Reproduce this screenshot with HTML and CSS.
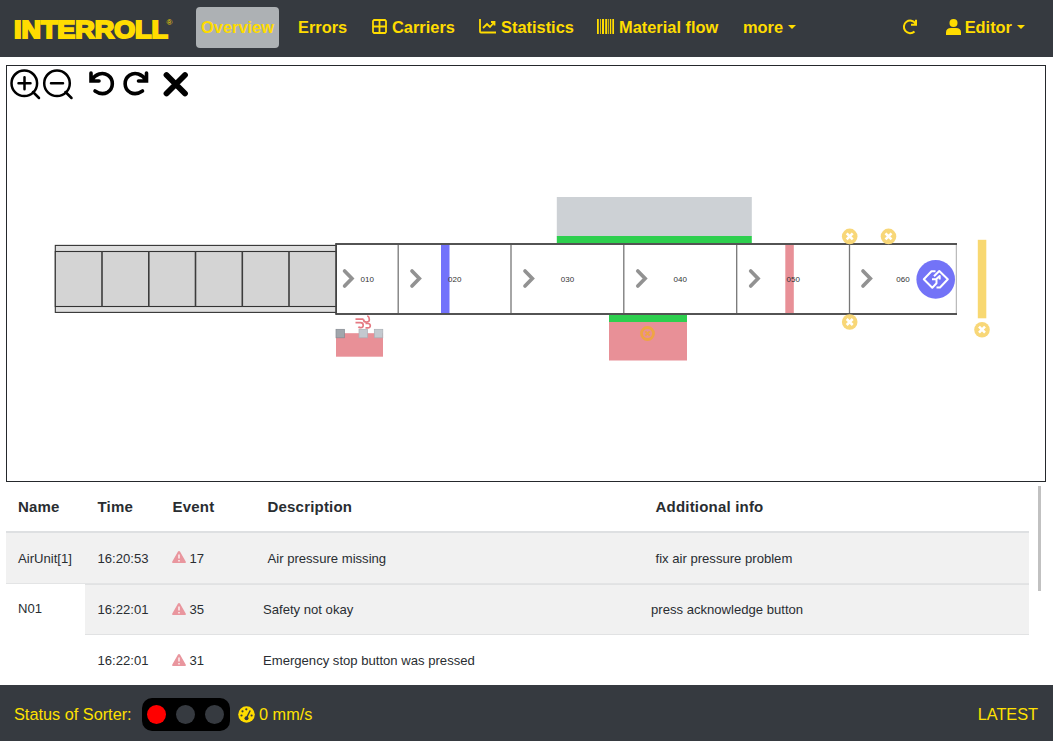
FILE: index.html
```html
<!DOCTYPE html>
<html lang="en">
<head>
<meta charset="utf-8">
<title>Interroll – Overview</title>
<link rel="stylesheet" href="styles.css">
</head>
<body>
<div class="app">
  <header class="navbar">
    <svg class="logo" width="162" height="32" viewBox="12 12 162 32">
      <text class="logo-text" x="14" y="37.500" textLength="154" lengthAdjust="spacingAndGlyphs">INTERROLL</text>
      <text class="logo-mark" x="166.500" y="25">®</text>
    </svg>
    <nav class="menu">
      <a class="item active">Overview</a>
      <a class="item errors">Errors</a>
      <a class="item carriers"><svg width="15" height="15" viewBox="0 0 15 15"><path class="line" d="M2 1h11l1 1v11l-1 1H2l-1-1V2zM7.500 1v13M1 7.500h13"/></svg>Carriers</a>
      <a class="item stats"><svg width="17" height="15" viewBox="0 0 17 15"><path class="line" d="M1 0v12.500q0 1 1 1h15M4 9l4-4 3 3 4-4.500M12 3h3.500v3.500"/></svg>Statistics</a>
      <a class="item flow"><svg width="17" height="15" viewBox="0 0 17 15"><path class="solid" d="M0 0h1.800v15H0zM3 0h.8v15H3zM5 0h2v15H5zM8.200 0h2v15h-2zM11.300 0h.8v15h-.8zM13 0h1.200v15H13zM15.300 0H17v15h-1.700z"/></svg>Material flow</a>
      <a class="item">more<i class="caret"></i></a>
    </nav>
    <div class="user-menu">
      <svg class="reload" width="16" height="16" viewBox="0 0 16 16"><path class="refresh" d="M13.500 4.500A6.300 6.300 0 1 0 12.500 12.500M14 .8v5h-5"/></svg>
      <a class="item user"><svg width="15" height="16" viewBox="0 0 15 16"><circle class="solid" cx="7.500" cy="4" r="4"/><path class="solid" d="M0 16v-2.500Q0 9 5 9h5q5 0 5 4.500V16z"/></svg>Editor<i class="caret"></i></a>
    </div>
  </header>

  <main class="content">
    <section class="canvas">
      <svg class="plan" width="1038" height="415" viewBox="7 66 1038 415">
        <defs>
          <path id="arrow" d="M-4-7.500 3.300 0-4 7.500"/>
          <g id="stop"><circle r="7.800"/><path d="M-3-3 3 3M3-3-3 3"/></g>
        </defs>
        <g class="tools">
          <g stroke-width="2.500"><circle cx="24.300" cy="83.300" r="12.800"/><path d="M18.500 83.300h12M24.500 77.300v12M33 92l6 6"/></g>
          <g stroke-width="2.500"><circle cx="57" cy="83.300" r="12.800"/><path d="M51 83.300h12M65.500 92l6 6"/></g>
          <path stroke-width="3.600" d="M91 73v8h8M91.500 80C95.500 74 102.500 71.500 108 75.300C114 79.500 113.700 88.500 107.500 92.300Q101.500 95.500 95 91"/>
          <path stroke-width="3.600" d="M146.500 73v8h-8M146 80C142 74 135 71.500 129.500 75.300C123.500 79.500 123.700 88.500 130 92.300Q136 95.500 142.500 91"/>
          <path stroke-width="5.800" d="M166.500 75 185 93.500M185 75 166.500 93.500"/>
        </g>

        <g class="belt">
          <rect class="rail" x="55.300" y="245.400" width="281" height="67"/>
          <rect class="bed" x="55.300" y="251.500" width="281" height="55"/>
          <path class="rib" d="M102 251v56M148.800 251v56M195.500 251v56M242.300 251v56M289 251v56"/>
        </g>

        <rect class="chute-grey" x="556.800" y="197" width="195" height="39.500"/>
        <rect class="green" x="556.800" y="236" width="195" height="8"/>
        <rect class="green" x="609" y="314" width="78" height="8"/>
        <rect class="red" x="609" y="322" width="78" height="38.500"/>

        <path class="divider" d="M398.200 244v70M511 244v70M623.800 244v70M736.700 244v70M849.500 244v70"/>
        <path class="end" d="M956.300 244v70"/>
        <rect class="blue" x="441" y="244" width="8.500" height="70"/>
        <rect class="red" x="785.300" y="244" width="8.500" height="70"/>
        <g class="labels">
          <text x="367.300" y="281.700">010</text><text x="454.800" y="281.700">020</text><text x="567.500" y="281.700">030</text>
          <text x="680.300" y="281.700">040</text><text x="793.300" y="281.700">050</text><text x="903" y="281.700">060</text>
        </g>
        <path class="track" d="M335.500 244H957M335.500 314H957"/>
        <path class="start" d="M336 243.300v71.300"/>
        <g class="arrows">
          <use href="#arrow" x="348.600" y="278.500"/><use href="#arrow" x="416" y="278.500"/><use href="#arrow" x="529" y="278.500"/>
          <use href="#arrow" x="641.800" y="278.500"/><use href="#arrow" x="754.700" y="278.500"/><use href="#arrow" x="867" y="278.500"/>
        </g>

        <rect class="red" x="336" y="333.200" width="47" height="23.500"/>
        <path class="air" d="M355.500 319.200h8M355.500 322.700h5q2.700 0 2.700 2.500t-2.700 2.400q-1.600 0-2-1M363.500 319.200q0 3 3 3t2.800-3q0-2.500-2-3.500M364.500 322.700M365.500 323.500h2q2.800 0 2.800 2.200t-2.800 2.100h-2"/>
        <rect class="node dark" x="336" y="329.300" width="8.500" height="8.500"/>
        <rect class="node" x="359" y="329.300" width="8.500" height="8.500"/>
        <rect class="node" x="374.300" y="329.300" width="8.500" height="8.500"/>

        <g class="stops">
          <use href="#stop" x="849.700" y="236.400"/><use href="#stop" x="888.500" y="236.400"/>
          <use href="#stop" x="849.700" y="322"/><use href="#stop" x="982" y="329.700"/>
        </g>
        <g class="muted-stop"><circle cx="647.500" cy="333.500" r="6"/><path d="M645.300 331.300l4.400 4.400M649.700 331.300l-4.400 4.400"/></g>
        <rect class="yellow" x="977.800" y="239.800" width="8.500" height="78.500"/>

        <circle class="badge" cx="935.700" cy="279.400" r="19.300"/>
        <path class="badge-line" d="M935.500 271.300H931.500L923.800 279.300 932.300 287.700 936.500 283.300V279.300L932 279.300M936.500 287.500H940L947.800 279.300 939.300 271 934 276.300M939.700 279.500V276L936 279.300"/>
      </svg>
    </section>

    <section class="events">
      <div class="table">
        <div class="row head"><b>Name</b><b>Time</b><b>Event</b><b>Description</b><b>Additional info</b></div>
        <div class="row first"><span>AirUnit[1]</span><span>16:20:53</span><span class="event"><svg width="14" height="12" viewBox="0 0 14 12"><path class="warn" d="M7 0q.7 0 1 .6l5.700 9.900q.5 1.500-1 1.500H1.300q-1.500 0-1-1.500L6 .6Q6.300 0 7 0z"/><path class="bang" d="M7 3.500v4M7 9v1.500"/></svg>17</span><span>Air pressure missing</span><span>fix air pressure problem</span></div>
        <div class="group">
          <div class="name">N01</div>
          <div class="rows">
            <div class="row sub shaded"><span>16:22:01</span><span class="event"><svg width="14" height="12" viewBox="0 0 14 12"><path class="warn" d="M7 0q.7 0 1 .6l5.700 9.900q.5 1.500-1 1.500H1.300q-1.500 0-1-1.500L6 .6Q6.300 0 7 0z"/><path class="bang" d="M7 3.500v4M7 9v1.500"/></svg>35</span><span>Safety not okay</span><span>press acknowledge button</span></div>
            <div class="row sub"><span>16:22:01</span><span class="event"><svg width="14" height="12" viewBox="0 0 14 12"><path class="warn" d="M7 0q.7 0 1 .6l5.700 9.900q.5 1.500-1 1.500H1.300q-1.500 0-1-1.500L6 .6Q6.300 0 7 0z"/><path class="bang" d="M7 3.500v4M7 9v1.500"/></svg>31</span><span>Emergency stop button was pressed</span><span></span></div>
          </div>
        </div>
      </div>
      <div class="scrollbar"></div>
    </section>
  </main>

  <footer class="statusbar">
    <span class="status-label">Status of Sorter:</span>
    <div class="lights"><i class="lamp on"></i><i class="lamp"></i><i class="lamp"></i></div>
    <svg width="17" height="17" viewBox="0 0 17 17"><circle class="solid" cx="8.500" cy="8.500" r="8.300"/><g class="gauge-dots"><circle cx="3.500" cy="9.500" r="1.100"/><circle cx="4.500" cy="5.300" r="1.100"/><circle cx="8.300" cy="3.300" r="1.100"/><circle cx="13.600" cy="9.500" r="1.100"/><circle cx="8.500" cy="12.300" r="2"/></g><path class="needle" d="M8.500 12 12.200 4.500"/></svg>
    <span class="speed">0 mm/s</span>
    <span class="version">LATEST</span>
  </footer>
</div>
</body>
</html>
```
FILE: styles.css
```css
* { box-sizing: border-box; }
body { margin: 0; background: #fff; color: #292d31; font-family: "Liberation Sans", Arial, sans-serif; }
.app { width: 1053px; height: 741px; display: flex; flex-direction: column; overflow: hidden; }

.navbar { height: 57px; flex: none; display: flex; align-items: center; padding: 0 28px 2px 12px; background: #363a40; color: #ffdc00; }
.logo { flex: none; margin-top: 1px; }
.logo-text { font-size: 23.8px; font-weight: bold; fill: #ffdc00; stroke: #ffdc00; stroke-width: 1.9; }
.logo-mark { font-size: 8px; fill: #ffdc00; }
.menu { display: flex; align-items: center; margin-left: 22px; }
.item { display: flex; align-items: center; padding-bottom: 2px; font-size: 16.4px; line-height: 18px; font-weight: bold; white-space: nowrap; }
.item svg { margin-right: 5px; flex: none; }
.active { width: 83px; height: 41px; justify-content: center; border-radius: 4px; background: #adb1b4; }
.errors { width: 74px; margin-left: 19px; }
.carriers { width: 107px; }
.stats { width: 118px; }
.flow { width: 146px; }
.caret { margin-left: 5px; border: 4px solid transparent; border-top-color: #ffdc00; border-bottom: 0; }
.user-menu { display: flex; align-items: center; margin-left: auto; }
.reload { margin-bottom: 2px; }
.user { margin-left: 28px; }
.user svg { margin-right: 4px; }
.line { fill: none; stroke: #ffdc00; stroke-width: 1.8; }
.solid { fill: #ffdc00; }
.refresh { fill: none; stroke: #ffdc00; stroke-width: 2; }

.content { flex: 1; min-height: 0; padding: 8px 7px 0 6px; }
.canvas { width: 1040px; height: 417px; border: 1px solid #25282c; }
.plan { display: block; }
.tools { fill: none; stroke: #000; stroke-linecap: round; }
.rail { fill: #dedede; stroke: #333; stroke-width: 1.1; }
.bed { fill: #d4d4d4; stroke: #333; stroke-width: 1.1; }
.rib { stroke: #3c3c3c; stroke-width: 1.6; }
.chute-grey { fill: #cdd1d5; }
.green { fill: #2dcf4e; }
.red { fill: #e89097; }
.blue { fill: #7272fb; }
.yellow { fill: #f8d871; }
.divider { stroke: #777; stroke-width: 1.3; }
.end { stroke: #aaa; }
.track { stroke: #535353; stroke-width: 1.8; }
.start { stroke: #444; stroke-width: 1.5; }
.labels { font-size: 8px; fill: #333; text-anchor: middle; }
.arrows { fill: none; stroke: #929292; stroke-width: 3.7; stroke-linecap: round; }
.air { fill: none; stroke: #e57982; stroke-width: 1.7; }
.node { fill: #c3c9cf; stroke: #aaafb5; stroke-width: .7; }
.dark { fill: #a1a6ac; stroke: #858b92; }
.stops { fill: #f8d778; stroke: none; }
#stop path { stroke: #fff; stroke-width: 2.6; }
.muted-stop { fill: none; stroke: #efa445; stroke-width: 2.8; }
.muted-stop path { stroke-width: 1.9; }
.badge { fill: #7373f7; }
.badge-line { fill: none; stroke: #fff; stroke-width: 2; stroke-linejoin: round; }

.events { height: 203px; display: flex; font-size: 13.1px; }
.table { width: 1023px; }
.row { display: grid; grid-template-columns: 79.5px 75px 95px 388px 1fr; align-items: center; padding-left: 12px; }
.head { height: 51px; font-size: 15px; letter-spacing: .2px; padding-bottom: 1px; border-bottom: 2px solid #dee0e2; }
.first { height: 51px; background: #f1f1f1; border-bottom: 1px solid #e3e4e5; }
.group { display: flex; }
.name { width: 79px; padding: 17px 0 0 12px; }
.rows { width: 944px; }
.sub { height: 51px; grid-template-columns: 75px 90.5px 388px 1fr; padding-left: 12.5px; }
.shaded { background: #f1f1f1; border-top: 1px solid #e1e2e3; border-bottom: 1px solid #e1e2e3; }
.event { display: flex; align-items: center; gap: 4px; margin-left: -1px; }
.event svg { margin-bottom: 2px; }
.warn { fill: #e9969e; }
.bang { fill: none; stroke: #fff; stroke-width: 1.3; }
.scrollbar { width: 3px; height: 105px; margin: 4px 0 0 9px; background: #c1c1c1; }

.statusbar { height: 56px; flex: none; display: flex; align-items: center; padding: 3px 15px 0 14px; background: #363a40; color: #ffe100; font-size: 16.3px; }
.status-label { width: 128px; white-space: nowrap; }
.lights { width: 88px; height: 33px; margin-right: 8px; padding-right: 2px; display: flex; align-items: center; justify-content: center; gap: 10px; border-radius: 10px; background: #000; }
.lamp { width: 19px; height: 19px; border-radius: 50%; background: #363a40; }
.on { background: #f00; }
.gauge-dots { fill: #363a40; }
.needle { stroke: #363a40; stroke-width: 1.5; }
.speed { margin-left: 4px; }
.version { margin-left: auto; }
```
